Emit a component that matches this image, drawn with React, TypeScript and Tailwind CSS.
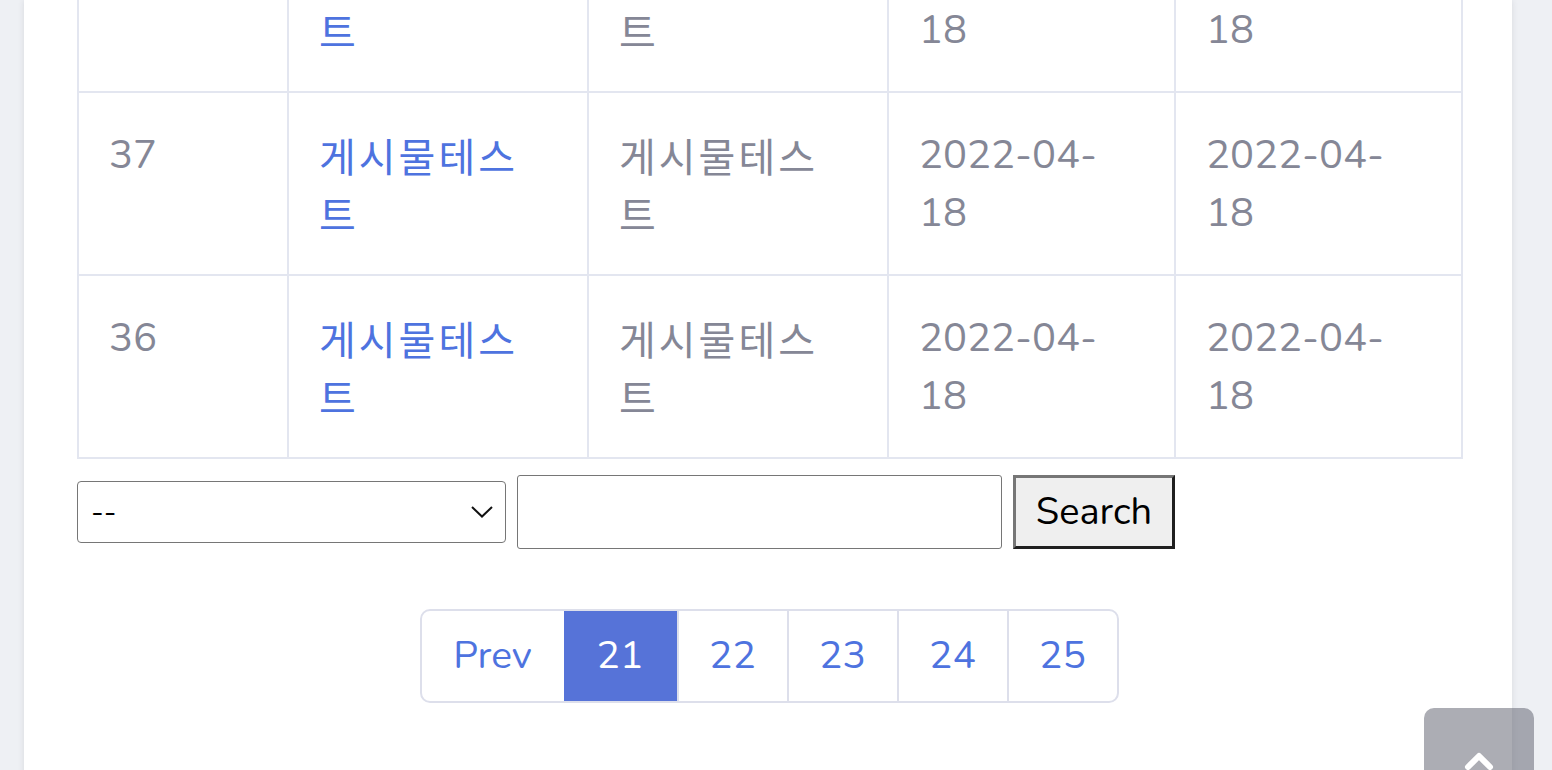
type Post = {
  id: string;
  title: string;
  writer: string;
  created: string;
  updated: string;
};

const posts: Post[] = [
  { id: "38", title: "게시물테스트", writer: "게시물테스트", created: "2022-04-18", updated: "2022-04-18" },
  { id: "37", title: "게시물테스트", writer: "게시물테스트", created: "2022-04-18", updated: "2022-04-18" },
  { id: "36", title: "게시물테스트", writer: "게시물테스트", created: "2022-04-18", updated: "2022-04-18" },
];

const pages = ["21", "22", "23", "24", "25"];

const font = "font-['Nunito','Noto_Sans','Noto_Sans_CJK_KR',sans-serif]";
const kr = "font-['Noto_Sans_CJK_KR',sans-serif] tracking-[3px]";

const Cell = ({ children, className = "" }: { children: React.ReactNode; className?: string }) => {
  return (
    <td className={`border-2 border-[#e3e6f0] pl-[30px] pr-[36px] pt-[33px] pb-[32px] align-top ${className}`}>
      {children}
    </td>
  );
};

const App = () => {
  return (
    <div className={`h-[770px] overflow-hidden bg-[#eef0f4] pl-[24px] pr-[40px] relative ${font}`}>
      <div className="h-[900px] flex flex-col bg-white pl-[53px] pr-[51px] shadow-[0_0_6px_rgba(58,59,69,0.12)]">
        <div className="-mt-[92px]">
          <table className="w-[1384px] table-fixed border-collapse text-[40px] leading-[58px] text-[#858796]">
            <colgroup>
              <col className="w-[210px]" />
              <col className="w-[300px]" />
              <col className="w-[300px]" />
              <col className="w-[287px]" />
              <col className="w-[287px]" />
            </colgroup>
            <tbody>
              {posts.map((p) => (
                <tr key={p.id}>
                  <Cell>{p.id}</Cell>
                  <Cell className={kr}>
                    <a href="#" className="text-[#4e73df]">
                      {p.title}
                    </a>
                  </Cell>
                  <Cell className={kr}>{p.writer}</Cell>
                  <Cell>{p.created}</Cell>
                  <Cell>{p.updated}</Cell>
                </tr>
              ))}
            </tbody>
          </table>

          <div className="mt-[16px] flex items-center gap-[11px]">
            <div className="w-[429px] h-[62px] border border-[#767676] rounded-[4px] flex items-center justify-between pl-[13px] pr-[12px] text-[30px] text-black">
              <span>--</span>
              <svg width="22" height="12" viewBox="0 0 22 12" fill="none">
                <path d="M1 1l10 9.5L21 1" stroke="#111" strokeWidth="2" />
              </svg>
            </div>
            <input
              type="text"
              className="w-[485px] h-[74px] border border-[#767676] rounded-[3px] outline-none px-3 text-[30px]"
            />
            <button className="w-[162px] h-[74px] bg-[#efefef] border-[3px] border-t-[#767676] border-l-[#767676] border-b-[#1f1f1f] border-r-[#1f1f1f] text-[38px] leading-none text-black">
              Search
            </button>
          </div>

          <div className="mt-[60px] flex justify-center">
            <div className="flex h-[94px] border-2 border-[#dddfeb] rounded-[10px] overflow-hidden text-[39px] text-[#4e73df]">
              <a href="#" className="w-[142px] flex items-center justify-center">
                Prev
              </a>
              {pages.map((n, i) => (
                <a
                  key={n}
                  href="#"
                  className={
                    i === 0
                      ? "w-[113px] -my-[2px] flex items-center justify-center bg-[#5673d8] text-white"
                      : "w-[110px] flex items-center justify-center border-l-2 border-[#dddfeb]"
                  }
                >
                  {n}
                </a>
              ))}
            </div>
          </div>
        </div>
      </div>

      <a
        href="#"
        className="absolute left-[1424px] top-[708px] w-[110px] h-[110px] rounded-[10px] bg-[rgba(90,92,105,0.5)] flex items-center justify-center"
      >
        <svg width="30" height="20" viewBox="0 0 30 20" fill="none" className="mt-[-4px]">
          <path d="M4 16L15 5l11 11" stroke="white" strokeWidth="6" strokeLinecap="round" strokeLinejoin="round" />
        </svg>
      </a>
    </div>
  );
};

export default App;
